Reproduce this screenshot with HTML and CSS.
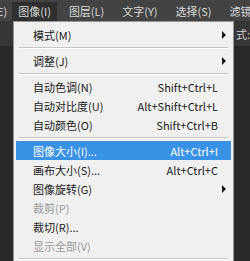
FILE: index.html
```html
<!DOCTYPE html>
<html lang="zh-CN">
<head>
    <meta charset="UTF-8">
    <title>图像菜单</title>
    <link rel="stylesheet" href="styles.css">
</head>
<body>
    <div class="menubar">
        <span class="top-item cut">E)</span>
        <span class="top-item active">图像(I)</span>
        <span class="top-item">图层(L)</span>
        <span class="top-item">文字(Y)</span>
        <span class="top-item">选择(S)</span>
        <span class="top-item">滤镜(I)</span>
    </div>
    <div class="workspace">
        <div class="options">
            <span class="opt-right">式:</span>
        </div>
    </div>

    <div class="menu">
        <div class="item sub"><span class="label">模式(M)</span></div>
        <div class="sep"></div>
        <div class="item sub"><span class="label">调整(J)</span></div>
        <div class="sep"></div>
        <div class="item"><span class="label">自动色调(N)</span><span class="key">Shift+Ctrl+L</span></div>
        <div class="item"><span class="label">自动对比度(U)</span><span class="key">Alt+Shift+Ctrl+L</span></div>
        <div class="item"><span class="label">自动颜色(O)</span><span class="key">Shift+Ctrl+B</span></div>
        <div class="sep"></div>
        <div class="item selected"><span class="label">图像大小(I)...</span><span class="key">Alt+Ctrl+I</span></div>
        <div class="item"><span class="label">画布大小(S)...</span><span class="key">Alt+Ctrl+C</span></div>
        <div class="item sub"><span class="label">图像旋转(G)</span></div>
        <div class="item disabled"><span class="label">裁剪(P)</span></div>
        <div class="item"><span class="label">裁切(R)...</span></div>
        <div class="item disabled"><span class="label">显示全部(V)</span></div>
        <div class="sep"></div>
    </div>
</body>
</html>
```

FILE: styles.css
```css
body {
    margin: 0;
    width: 250px;
    height: 261px;
    overflow: hidden;
    background-color: #262626;
    font-family: "Microsoft YaHei", "Noto Sans CJK SC", "Liberation Sans", sans-serif;
    font-size: 11px;
    position: relative;
}

.menubar {
    height: 21px;
    background-color: #434343;
    display: flex;
    align-items: flex-end;
}

.top-item {
    color: #d8d8d8;
    height: 19px;
    line-height: 18px;
    padding: 0 6px;
    margin-right: 6px;
    white-space: nowrap;
}

.top-item.cut {
    padding: 0;
    margin-left: -3px;
    margin-right: 5px;
}

.top-item.active {
    background-color: #2f2f2f;
}

.workspace {
    height: 240px;
    background-color: #282828;
}

.options {
    height: 25px;
    background-color: #353535;
    display: flex;
    justify-content: flex-end;
    align-items: center;
    color: #cfcfcf;
}

.menu {
    position: absolute;
    left: 13px;
    top: 21px;
    width: 221px;
    height: 245px;
    background-color: #f0f0f0;
    border: 1px solid #979797;
    box-sizing: border-box;
    padding: 3px 2px 0 2px;
}

.item {
    height: 19px;
    display: flex;
    align-items: center;
    justify-content: space-between;
    padding: 0 13px 0 17px;
    color: #1a1a1a;
    position: relative;
}

.item.selected {
    background-color: #3a92e6;
    color: #ffffff;
}

.item.disabled {
    color: #9a9a9a;
}

.item.sub::after {
    content: "";
    position: absolute;
    right: 5px;
    top: 6px;
    border-left: 4px solid #1a1a1a;
    border-top: 4px solid transparent;
    border-bottom: 4px solid transparent;
}

.sep {
    height: 1px;
    margin: 3px 3px 2px 3px;
    background-color: #c5c5c5;
    border-bottom: 1px solid #ffffff;
}
```
